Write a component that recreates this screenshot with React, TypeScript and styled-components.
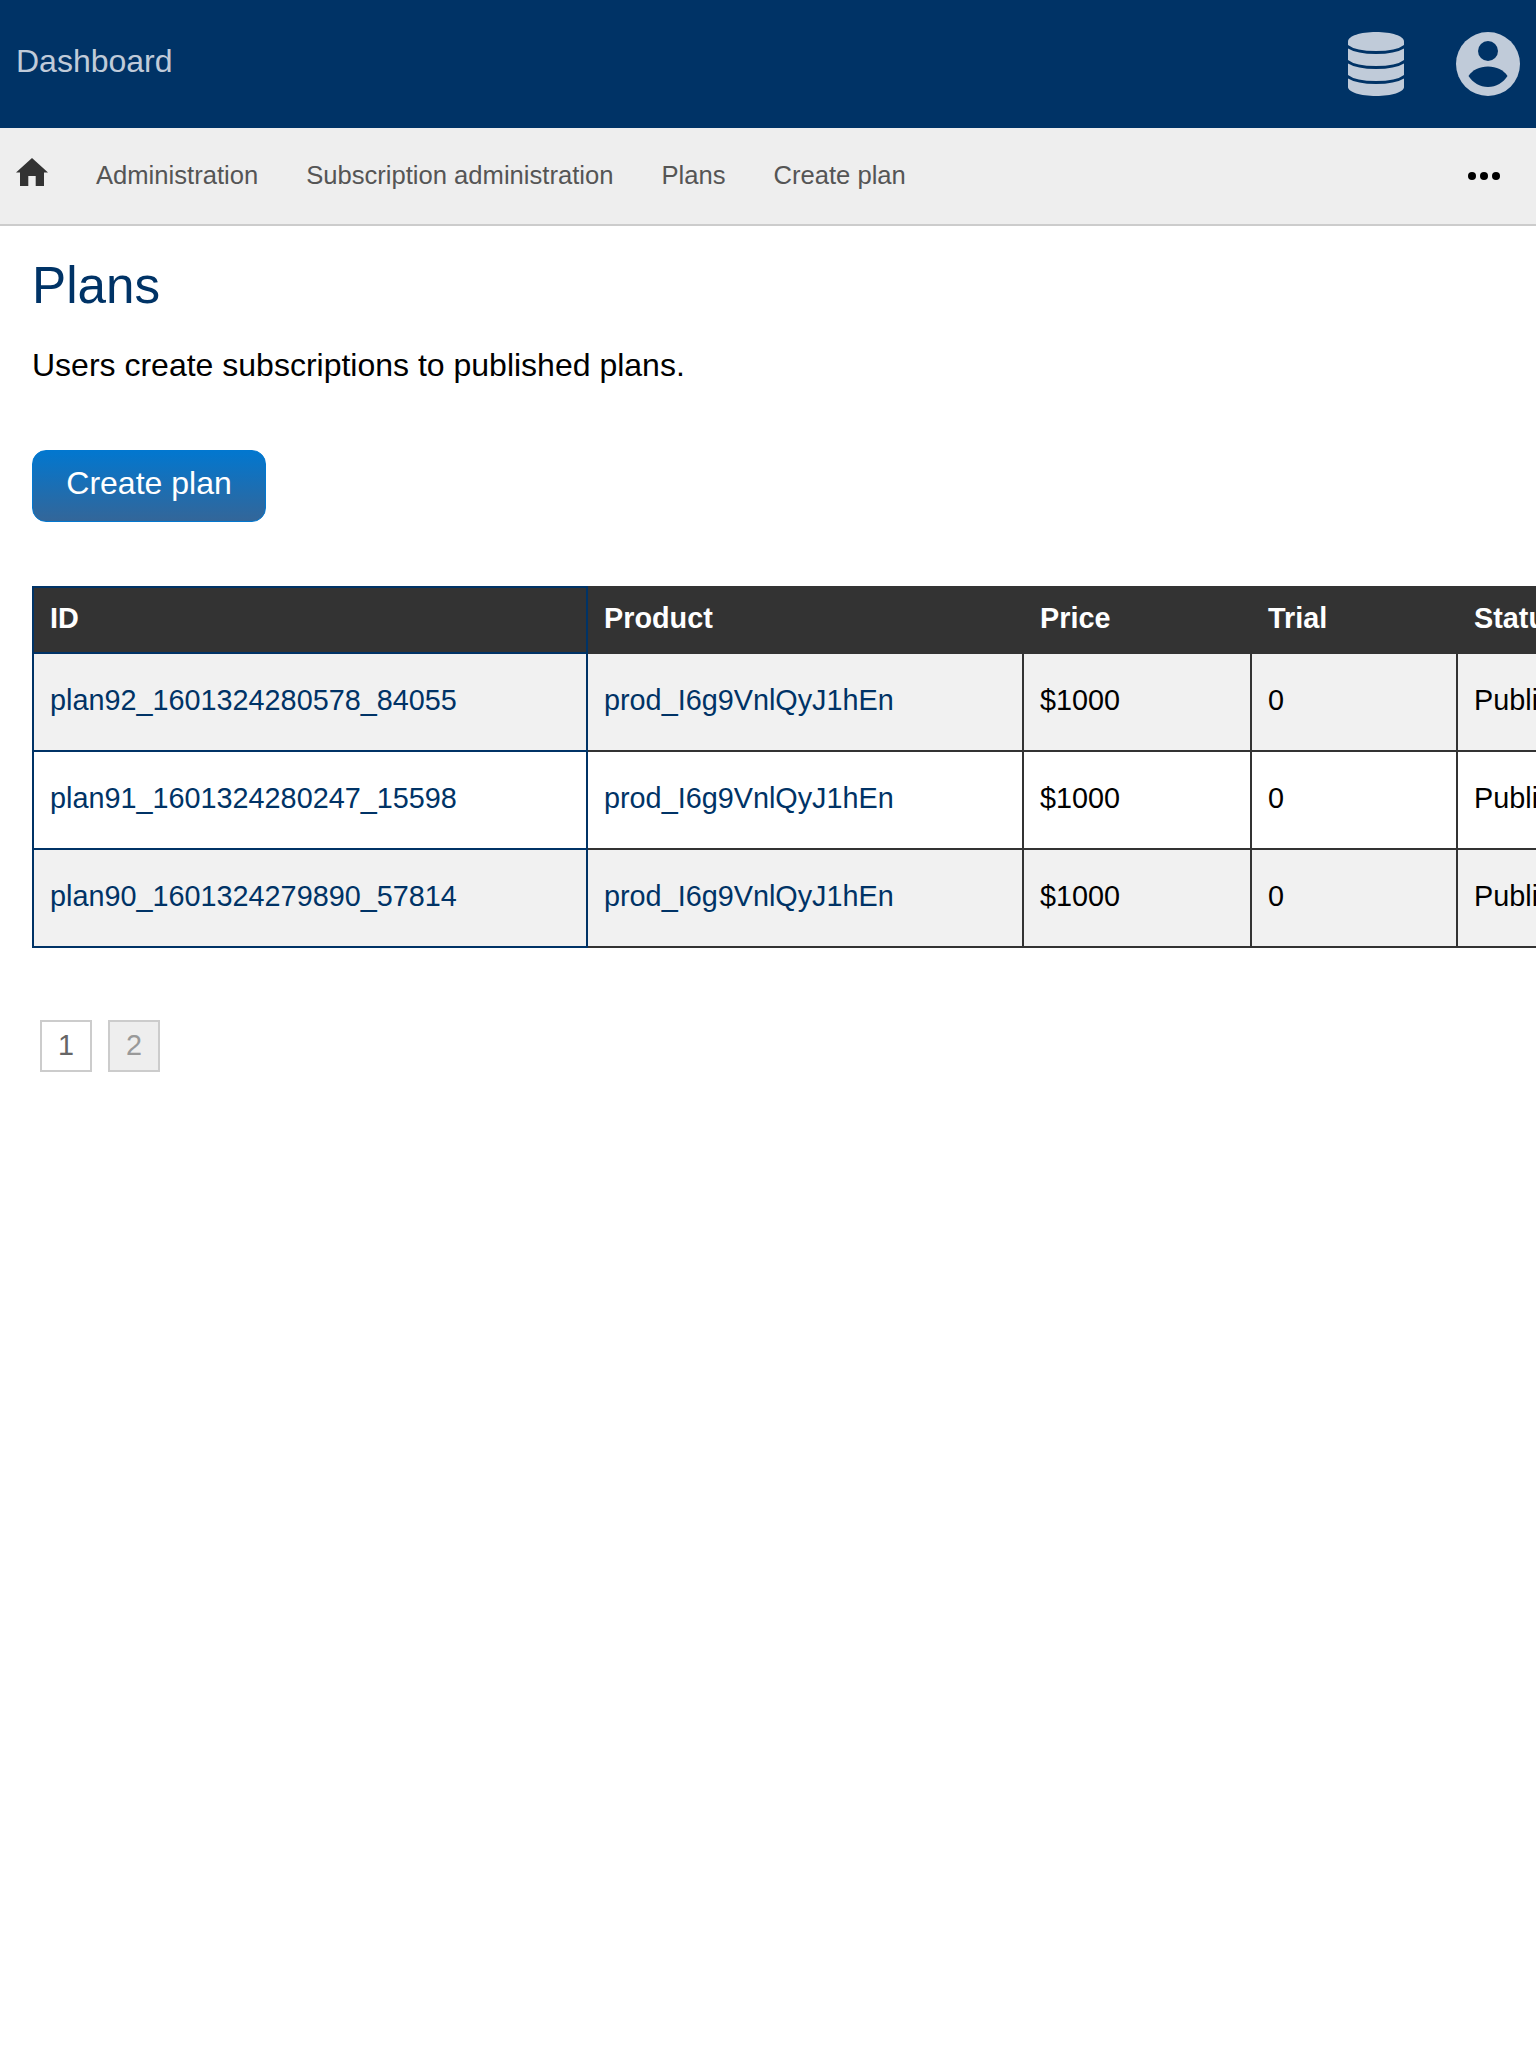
import React from 'react';
import styled, { createGlobalStyle } from 'styled-components';

const navy = '#003366';

const GlobalStyle = createGlobalStyle`
  html, body {
    margin: 0;
    padding: 0;
    background: #fff;
    overflow-x: hidden;
    font-family: "Liberation Sans", Arial, sans-serif;
  }
`;

const Page = styled.div`
  width: 1536px;
  min-height: 2048px;
  overflow: hidden;
`;

const TopBar = styled.header`
  height: 128px;
  background: ${navy};
  display: flex;
  align-items: center;
  padding: 0 16px;
  box-sizing: border-box;
`;

const Brand = styled.a`
  font-size: 32px;
  color: #c0cbd9;
  margin-right: auto;
  padding-bottom: 6px;
`;

const TopIcons = styled.div`
  display: flex;
  align-items: center;
  gap: 52px;
`;

const NavBar = styled.nav`
  height: 96px;
  background: #eee;
  border-bottom: 2px solid #ccc;
  display: flex;
  align-items: center;
  padding: 0 36px 0 16px;
`;

const HomeLink = styled.a`
  display: flex;
  margin: 0 48px 8px 0;
  color: #333;
`;

const NavLink = styled.a`
  font-size: 25.6px;
  color: #555;
  margin-right: 48px;
  padding-bottom: 2px;
`;

const More = styled.div`
  margin-left: auto;
  display: flex;
  gap: 4px;
`;

const Dot = styled.span`
  width: 8px;
  height: 8px;
  border-radius: 50%;
  background: #000;
`;

const Main = styled.main`
  padding: 32px 0 0 32px;
`;

const Title = styled.h1`
  margin: 0;
  font-size: 51.2px;
  font-weight: 400;
  line-height: 56px;
  color: ${navy};
`;

const Lead = styled.p`
  margin: 31px 0 0;
  font-size: 32px;
  line-height: 40px;
  color: #000;
`;

const Button = styled.a`
  display: block;
  width: 234px;
  margin-top: 65px;
  height: 72px;
  line-height: 64px;
  box-sizing: border-box;
  text-align: center;
  font-size: 32px;
  color: #fff;
  border: 1px solid #0277cf;
  border-radius: 14px;
  background: linear-gradient(#0277cf, #336699);
`;

const Table = styled.table`
  display: block;
  margin-top: 64px;
  border-collapse: collapse;
  width: max-content;
  font-size: 28.8px;
`;

const HeadCell = styled.th<{ $w: number }>`
  width: ${(p) => p.$w}px;
  box-sizing: border-box;
  height: 66px;
  padding: 0 16px 3px;
  background: #333;
  color: #fff;
  text-align: left;
  font-weight: 700;
  border: 2px solid #333;
  &:first-child {
    border-color: ${navy};
  }
`;

const Cell = styled.td`
  box-sizing: border-box;
  height: 98px;
  padding: 0 16px 4px;
  color: #000;
  border: 2px solid #333;
  &:first-child {
    border-color: ${navy};
  }
`;

const Row = styled.tr<{ $odd: boolean }>`
  background: ${(p) => (p.$odd ? '#f1f1f1' : '#fff')};
`;

const CellLink = styled.a`
  color: ${navy};
`;

const Pager = styled.div`
  display: flex;
  gap: 16px;
  margin: 72px 0 0 8px;
`;

const PageItem = styled.a<{ $current?: boolean }>`
  width: 52px;
  height: 52px;
  box-sizing: border-box;
  border: 2px solid #ccc;
  display: flex;
  align-items: center;
  justify-content: center;
  font-size: 28.8px;
  padding-bottom: 2px;
  color: ${(p) => (p.$current ? '#999' : '#666')};
  background: ${(p) => (p.$current ? '#eee' : '#fff')};
`;

const columns = [
  { label: 'ID', width: 554 },
  { label: 'Product', width: 436 },
  { label: 'Price', width: 228 },
  { label: 'Trial', width: 206 },
  { label: 'Status', width: 200 },
];

const plans = [
  'plan92_1601324280578_84055',
  'plan91_1601324280247_15598',
  'plan90_1601324279890_57814',
];

const DatabaseIcon = () => (
  <svg width="56" height="64" viewBox="0 0 56 64">
    <path
      d="M0 9.500C0 4 12.500 0 28 0s28 4 28 9.500V55c0 5-12.500 9-28 9S0 60 0 55z"
      fill="#c0cbd9"
    />
    <g fill="none" stroke={navy} strokeWidth="3">
      <path d="M-1 14c5 4 16 6.500 29 6.500S52 18 57 14" />
      <path d="M-1 29c5 4 16 6.500 29 6.500S52 33 57 29" />
      <path d="M-1 44c5 4 16 6.500 29 6.500S52 48 57 44" />
    </g>
  </svg>
);

const UserIcon = () => (
  <svg width="64" height="64" viewBox="0 0 64 64">
    <circle cx="32" cy="32" r="32" fill="#c0cbd9" />
    <circle cx="32" cy="19" r="10" fill={navy} />
    <path d="M12.500 44c4-6 11-9.500 19.500-9.500S47.500 38 51.500 44C47.500 50.500 40 55 32 55S16.500 50.500 12.500 44z" fill={navy} />
  </svg>
);

const HomeIcon = () => (
  <svg width="32" height="28" viewBox="0 0 32 28" fill="currentColor">
    <path d="M16 0 0 14.500h4V28h8.300V18h7.400v10H28V14.500h4z" />
  </svg>
);

export default function App() {
  return (
    <Page>
      <GlobalStyle />
      <TopBar>
        <Brand>Dashboard</Brand>
        <TopIcons>
          <DatabaseIcon />
          <UserIcon />
        </TopIcons>
      </TopBar>
      <NavBar>
        <HomeLink>
          <HomeIcon />
        </HomeLink>
        <NavLink>Administration</NavLink>
        <NavLink>Subscription administration</NavLink>
        <NavLink>Plans</NavLink>
        <NavLink>Create plan</NavLink>
        <More>
          <Dot />
          <Dot />
          <Dot />
        </More>
      </NavBar>
      <Main>
        <Title>Plans</Title>
        <Lead>Users create subscriptions to published plans.</Lead>
        <Button>Create plan</Button>
        <Table>
          <thead>
            <tr>
              {columns.map((c) => (
                <HeadCell key={c.label} $w={c.width}>
                  {c.label}
                </HeadCell>
              ))}
            </tr>
          </thead>
          <tbody>
            {plans.map((id, i) => (
              <Row key={id} $odd={i % 2 === 0}>
                <Cell>
                  <CellLink>{id}</CellLink>
                </Cell>
                <Cell>
                  <CellLink>prod_I6g9VnlQyJ1hEn</CellLink>
                </Cell>
                <Cell>$1000</Cell>
                <Cell>0</Cell>
                <Cell>Published</Cell>
              </Row>
            ))}
          </tbody>
        </Table>
        <Pager>
          <PageItem>1</PageItem>
          <PageItem $current>2</PageItem>
        </Pager>
      </Main>
    </Page>
  );
}
